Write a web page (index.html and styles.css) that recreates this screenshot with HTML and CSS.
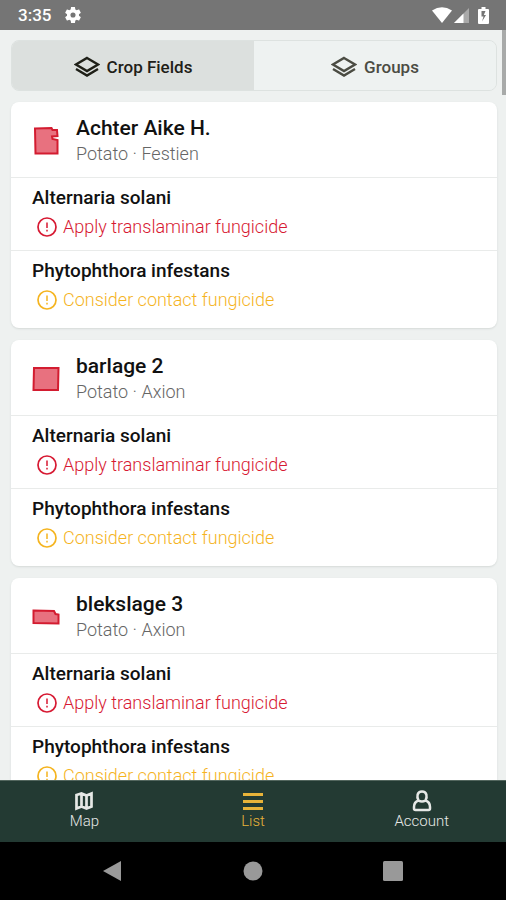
FILE: index.html
```html
<!DOCTYPE html>
<html lang="en">
<head>
<meta charset="utf-8">
<meta name="viewport" content="width=device-width, initial-scale=1">
<title>Crop Fields</title>
<link rel="stylesheet" href="styles.css">
</head>
<body>
<svg class="defs" aria-hidden="true">
  <symbol id="layers" viewBox="0 0 26 22"><path d="M13 2 L24 8.500 L13 15 L2 8.500 Z M2 13 L13 19.500 L24 13" fill="none" stroke="currentColor" stroke-width="2.400"/></symbol>
  <symbol id="alert" viewBox="0 0 20 20"><circle cx="10" cy="10" r="9" fill="none" stroke="currentColor" stroke-width="1.700"/><path d="M10 5.500v5.500M10 12.700v1.700" stroke="currentColor" stroke-width="1.500"/></symbol>
</svg>
<header class="status">
  <span class="clock">3:35</span>
  <svg class="gear" viewBox="2 2 20 20" aria-hidden="true"><path fill="currentColor" fill-rule="evenodd" d="M19.430 12.980c.04-.32.070-.64.070-.98s-.03-.66-.07-.98l2.110-1.650c.19-.15.240-.42.120-.64l-2-3.460c-.12-.22-.39-.3-.61-.22l-2.490 1c-.52-.4-1.080-.73-1.690-.98l-.38-2.650C14.460 2.180 14.250 2 14 2h-4c-.25 0-.46.180-.49.420l-.38 2.650c-.61.250-1.170.590-1.690.980l-2.490-1c-.23-.09-.49 0-.61.220l-2 3.460c-.13.220-.07.490.120.640l2.110 1.650c-.04.320-.07.650-.07.980s.03.660.070.980l-2.110 1.650c-.19.150-.24.420-.12.640l2 3.460c.12.220.39.300.61.220l2.490-1c.52.400 1.080.730 1.690.980l.38 2.650c.03.240.24.420.49.420h4c.25 0 .46-.18.490-.42l.38-2.650c.61-.25 1.170-.59 1.690-.98l2.490 1c.23.090.49 0 .61-.22l2-3.460c.12-.22.070-.49-.12-.64zM12 15.200a3.200 3.200 0 1 1 0-6.400 3.200 3.200 0 0 1 0 6.400z"/></svg>
  <span class="signals">
    <svg width="20" height="16" viewBox="0 0 20 16" aria-hidden="true"><path fill="#fff" d="M0 3.500Q10-3 20 3.500L10 16z"/></svg>
    <svg width="15" height="15" viewBox="0 0 15 15" aria-hidden="true"><path fill="#a9a9a9" d="M15 0v15H0z"/><path fill="#fff" d="M9.500 5.500V15H0z"/></svg>
    <svg class="battery" width="11" height="17" viewBox="0 0 11 17" aria-hidden="true"><path fill="#fff" d="M3.500 0h4v2H10a1 1 0 0 1 1 1v13a1 1 0 0 1-1 1H1a1 1 0 0 1-1-1V3a1 1 0 0 1 1-1h2.500z"/><path fill="#757575" d="M7.500 4H3.500v5.500h2L4 14.500 8 8H5.800z"/></svg>
  </span>
</header>
<main class="content">
  <div class="tabs">
    <button class="tab active" type="button"><svg class="layers" aria-hidden="true"><use href="#layers"/></svg>Crop Fields</button>
    <button class="tab" type="button"><svg class="layers" aria-hidden="true"><use href="#layers"/></svg>Groups</button>
  </div>
  <article class="card">
    <header class="field">
      <svg class="shape" viewBox="0 0 28 30" aria-hidden="true"><path d="M3 2.500 L19.500 2 L20.500 4 L25 4 L25.500 10 L20 10.500 L20.500 13 L25.500 14 L25.500 27.500 L3.500 27.500 Z"/></svg>
      <div><h2>Achter Aike H.</h2><p>Potato · Festien</p></div>
    </header>
    <section class="disease"><h3>Alternaria solani</h3><p class="advice red"><svg aria-hidden="true"><use href="#alert"/></svg>Apply translaminar fungicide</p></section>
    <section class="disease"><h3>Phytophthora infestans</h3><p class="advice amber"><svg aria-hidden="true"><use href="#alert"/></svg>Consider contact fungicide</p></section>
  </article>
  <article class="card">
    <header class="field">
      <svg class="shape" viewBox="0 0 28 30" aria-hidden="true"><path d="M2 4 L26.500 4 L26 26 L1.500 26 Z"/></svg>
      <div><h2>barlage 2</h2><p>Potato · Axion</p></div>
    </header>
    <section class="disease"><h3>Alternaria solani</h3><p class="advice red"><svg aria-hidden="true"><use href="#alert"/></svg>Apply translaminar fungicide</p></section>
    <section class="disease"><h3>Phytophthora infestans</h3><p class="advice amber"><svg aria-hidden="true"><use href="#alert"/></svg>Consider contact fungicide</p></section>
  </article>
  <article class="card">
    <header class="field">
      <svg class="shape" viewBox="0 0 28 30" aria-hidden="true"><path d="M1.500 8.500 L22 9 L23.500 12 L26.500 12.500 L26.500 21.500 L1.500 21 Z"/></svg>
      <div><h2>blekslage 3</h2><p>Potato · Axion</p></div>
    </header>
    <section class="disease"><h3>Alternaria solani</h3><p class="advice red"><svg aria-hidden="true"><use href="#alert"/></svg>Apply translaminar fungicide</p></section>
    <section class="disease"><h3>Phytophthora infestans</h3><p class="advice amber"><svg aria-hidden="true"><use href="#alert"/></svg>Consider contact fungicide</p></section>
  </article>
  <span class="thumb"></span>
</main>
<nav class="nav">
  <a href="#map"><svg viewBox="0 0 22 22" aria-hidden="true"><path d="M3.500 5 L8.500 3.500 L13.500 5.500 L18.500 3.500 V16.500 L13.500 18.500 L8.500 16.500 L3.500 18.500 Z M8.500 3.500 V16.500 M13.500 5.500 V18.500" fill="none" stroke="currentColor" stroke-width="2.700"/></svg>Map</a>
  <a href="#list" class="current"><svg viewBox="0 0 22 22" aria-hidden="true"><path d="M1 4.500h20M1 11.500h20M1 18.500h20" stroke="currentColor" stroke-width="3"/></svg>List</a>
  <a href="#account"><svg viewBox="0 0 22 22" aria-hidden="true"><path d="M7.500 10.500 C5.500 7 6 1.500 11 1.500 S16.500 7 14.500 10.500 Q19 12 19 17 V18.500 Q19 20 17.500 20 H4.500 Q3 20 3 18.500 V17 Q3 12 7.500 10.500 Z M7.500 10.500 Q11 12.500 14.500 10.500" fill="none" stroke="currentColor" stroke-width="2.500"/></svg>Account</a>
</nav>
<footer class="system">
  <button type="button" aria-label="Back"><svg viewBox="0 0 20 20"><path d="M18 0 V20 L0 10 Z"/></svg></button>
  <button type="button" aria-label="Home"><svg viewBox="0 0 20 20"><circle cx="10" cy="10" r="9.500"/></svg></button>
  <button type="button" aria-label="Recent apps"><svg viewBox="0 0 20 20"><rect width="20" height="20" rx="1.500"/></svg></button>
</footer>
</body>
</html>
```
FILE: styles.css
```css
* { box-sizing: border-box; }

body {
  margin: 0;
  height: 100vh;
  display: flex;
  flex-direction: column;
  overflow: hidden;
  background: #eef1f0;
  color: #111;
  font-family: Roboto, "Liberation Sans", sans-serif;
}

h2, h3, p { margin: 0; font-weight: 500; }
svg { display: block; flex: none; }
button { border: 0; padding: 0; font: inherit; }
.defs { position: absolute; width: 0; height: 0; }

.status {
  flex: none;
  display: flex;
  align-items: center;
  height: 30px;
  padding: 0 17px 0 18px;
  gap: 14px;
  background: #757575;
  color: #fff;
}
.clock { font-size: 17px; font-weight: 500; }
.gear { width: 16px; height: 16px; }
.signals { display: flex; align-items: center; gap: 2px; margin-left: auto; }
.battery { margin-left: 7px; }

.content {
  position: relative;
  flex: 1;
  min-height: 0;
  overflow: hidden;
  padding: 10px 9px 0 11px;
}
.thumb {
  position: absolute;
  top: 0;
  right: 0;
  width: 4px;
  height: 65px;
  background: #a8aaa9;
}

.tabs {
  display: flex;
  height: 51px;
  margin-bottom: 11px;
  border: 1px solid #dde2e0;
  border-radius: 8px;
  overflow: hidden;
}
.tab {
  flex: 1;
  display: flex;
  align-items: center;
  justify-content: center;
  gap: 7px;
  padding-top: 2px;
  background: #eef2f1;
  color: #4b4c43;
  font-size: 17px;
  font-weight: 500;
}
.tab.active { background: #dce0de; color: #1f2018; }
.layers { width: 26px; height: 22px; }

.card {
  margin-bottom: 12px;
  border-radius: 8px;
  background: #fff;
  box-shadow: 0 1px 2px #d5dad8;
}
.field {
  display: flex;
  align-items: center;
  gap: 16px;
  height: 75px;
  padding: 2px 21px 0;
}
.shape { width: 28px; height: 30px; }
.shape path { fill: #e8717f; stroke: #d31c30; stroke-width: 2px; }
h2 { font-size: 21px; line-height: 26px; }
.field p { color: #666; font-size: 18px; font-weight: 300; line-height: 26px; }

.disease {
  height: 73px;
  padding: 6px 21px 0;
  border-top: 1px solid #e9ebea;
}
.disease:last-child { height: 78px; }
h3 { font-size: 19px; line-height: 28px; }
.advice {
  display: flex;
  align-items: center;
  gap: 6px;
  padding-left: 5px;
  font-size: 18px;
  font-weight: 300;
  line-height: 30px;
}
.advice svg { width: 20px; height: 20px; }
.red { color: #d71932; }
.amber { color: #f5b41f; }

.nav {
  flex: none;
  display: flex;
  height: 62px;
  border-top: 1px solid #53665e;
  background: #233a33;
}
.nav a {
  flex: 1;
  display: flex;
  flex-direction: column;
  align-items: center;
  padding-top: 9px;
  color: #e6e8e6;
  font-size: 15px;
  font-weight: 300;
  line-height: 19px;
  text-decoration: none;
}
.nav svg { width: 22px; height: 22px; }
.nav .current { color: #e8b339; }

.system {
  flex: none;
  display: flex;
  justify-content: center;
  align-items: center;
  gap: 120px;
  height: 58px;
  background: #000;
}
.system button { background: none; }
.system svg { width: 20px; height: 20px; fill: #999; }
```
